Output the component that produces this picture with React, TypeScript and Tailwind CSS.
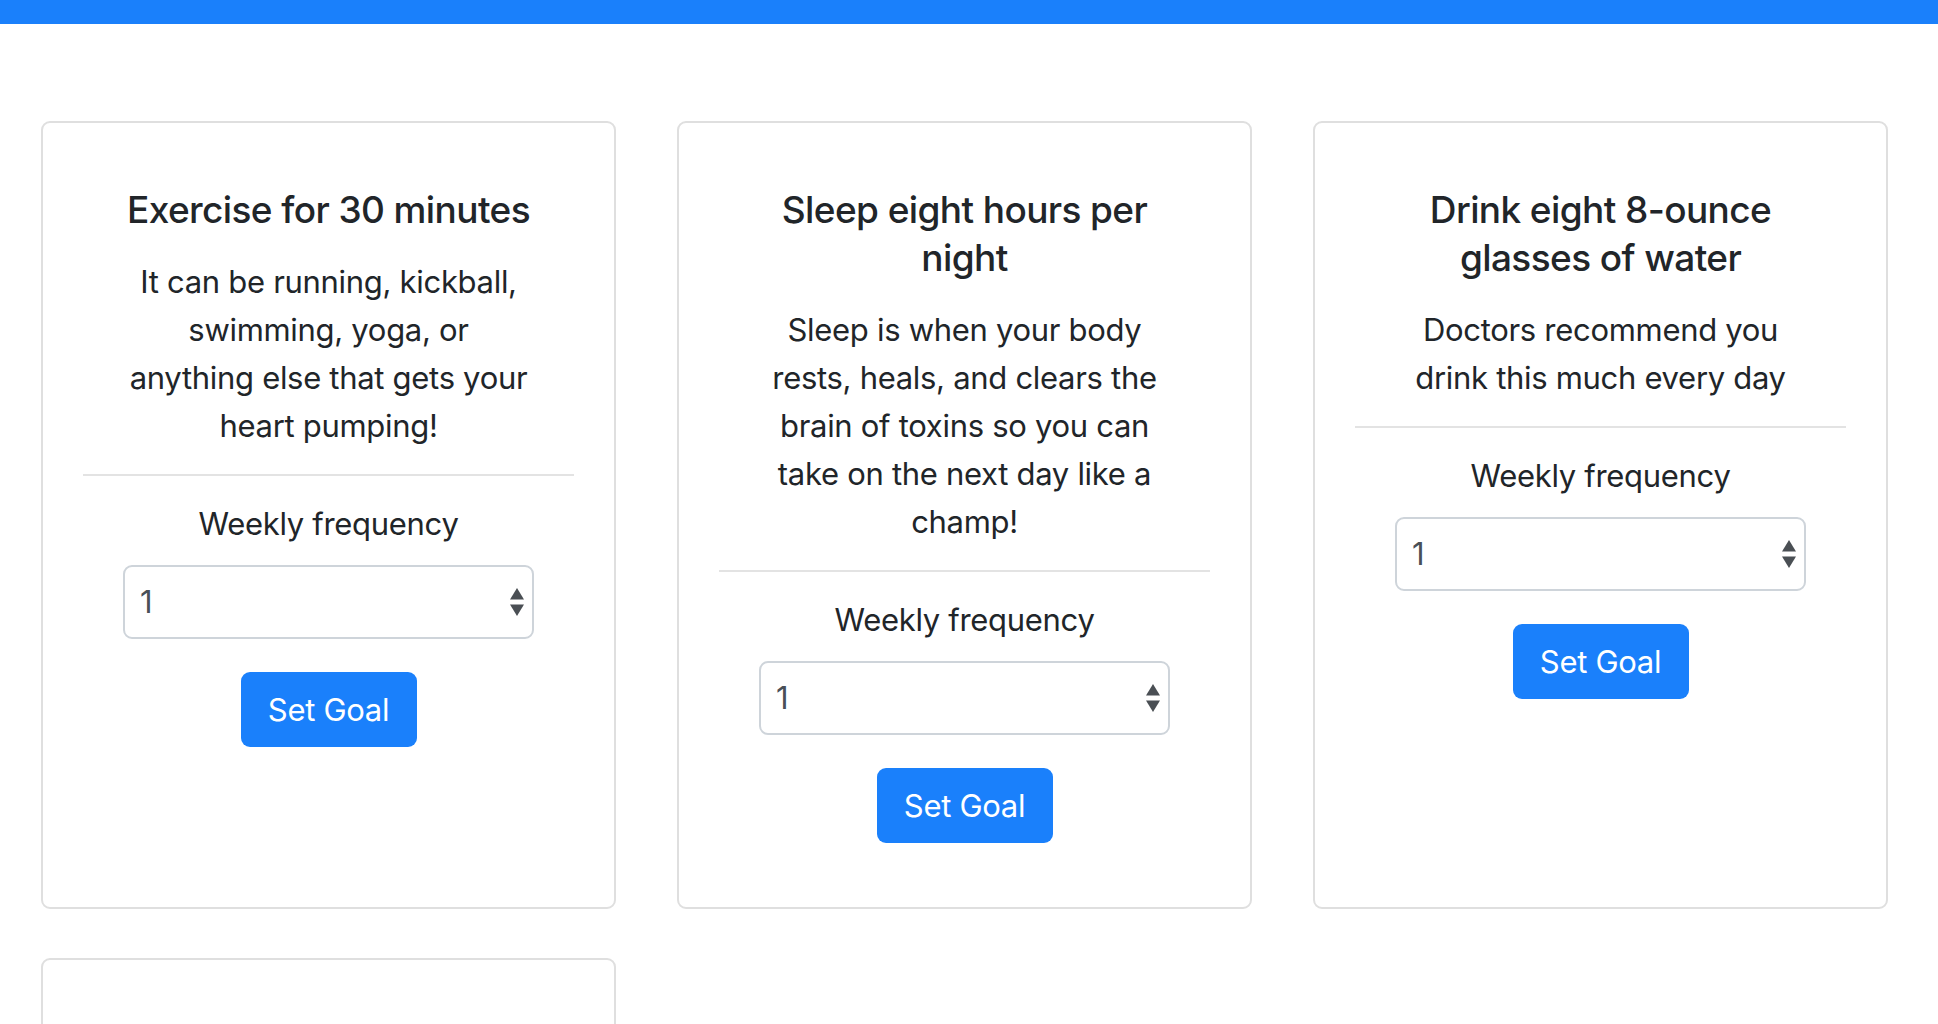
import React from "react";

type Goal = { title: string[]; body: string[] };

const goals: Goal[] = [
  {
    title: ["Exercise for 30 minutes"],
    body: [
      "It can be running, kickball,",
      "swimming, yoga, or",
      "anything else that gets your",
      "heart pumping!",
    ],
  },
  {
    title: ["Sleep eight hours per", "night"],
    body: [
      "Sleep is when your body",
      "rests, heals, and clears the",
      "brain of toxins so you can",
      "take on the next day like a",
      "champ!",
    ],
  },
  {
    title: ["Drink eight 8-ounce", "glasses of water"],
    body: ["Doctors recommend you", "drink this much every day"],
  },
];

function Arrows() {
  return (
    <svg width="16" height="30" viewBox="0 0 16 30" className="text-[#4a4f54]">
      <path d="M8 1 L15 12.5 L1 12.5 Z" fill="currentColor" />
      <path d="M1 17.5 L15 17.5 L8 29 Z" fill="currentColor" />
    </svg>
  );
}

function Card({ goal }: { goal: Goal }) {
  return (
    <div className="w-[575px] h-[788px] border-2 border-[#dfdfdf] rounded-[9px] bg-white">
      <div className="px-[40px] pt-[63px]">
        <div className="px-[40px] text-center">
          <h4 className="text-[37px] leading-[48px] font-medium text-[#212529] tracking-[-0.6px]">
            {goal.title.map((l, i) => (
              <div key={i} className="whitespace-nowrap">
                {l}
              </div>
            ))}
          </h4>
          <div className="mt-[24px] text-[31px] leading-[48px] text-[#212529] tracking-[-0.3px]">
            {goal.body.map((l, i) => (
              <div key={i} className="whitespace-nowrap">
                {l}
              </div>
            ))}
          </div>
        </div>
        <div className="mt-[24px] h-[2px] bg-[#e3e3e3]" />
        <div className="px-[40px] text-center">
          <div className="mt-[24px] text-[31px] leading-[48px] text-[#212529] tracking-[-0.3px]">
            Weekly frequency
          </div>
          <div className="mt-[17px] h-[74px] border-2 border-[#ced4da] rounded-[9px] flex items-center justify-between pl-[15px] pr-[7px]">
            <span className="text-[31px] text-[#495057]">1</span>
            <Arrows />
          </div>
          <div className="mt-[33px] flex justify-center">
            <button className="w-[176px] h-[75px] rounded-[9px] bg-[#1a80fb] text-white text-[31px] leading-[48px] tracking-[-0.3px]">
              Set Goal
            </button>
          </div>
        </div>
      </div>
    </div>
  );
}

export default function App() {
  return (
    <div
      className="min-h-screen bg-white"
      style={{ fontFamily: "Inter, 'Noto Sans', Roboto, sans-serif" }}
    >
      <div className="h-[24px] bg-[#1a80fb]" />
      <div className="pt-[97px] pl-[41px] pb-[40px]">
        <div className="grid grid-cols-[575px_575px_575px] gap-x-[61px] gap-y-[49px]">
          {goals.map((g, i) => (
            <Card key={i} goal={g} />
          ))}
          <div className="w-[575px] h-[788px] border-2 border-[#dfdfdf] rounded-[9px] bg-white" />
        </div>
      </div>
    </div>
  );
}
